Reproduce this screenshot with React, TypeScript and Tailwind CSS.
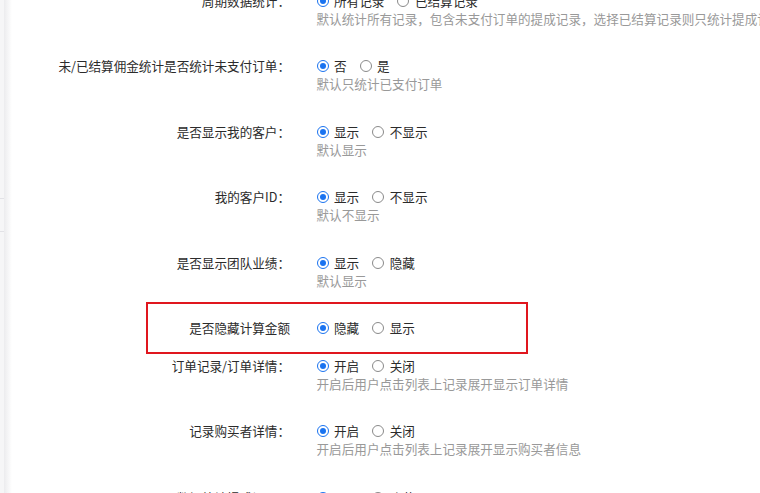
import React from 'react';

interface Row {
    label: string;
    options: string[];
    hint?: string;
}

const rows: Row[] = [
    { label: '周期数据统计：', options: ['所有记录', '已结算记录'], hint: '默认统计所有记录，包含未支付订单的提成记录，选择已结算记录则只统计提成记录' },
    { label: '未/已结算佣金统计是否统计未支付订单：', options: ['否', '是'], hint: '默认只统计已支付订单' },
    { label: '是否显示我的客户：', options: ['显示', '不显示'], hint: '默认显示' },
    { label: '我的客户ID：', options: ['显示', '不显示'], hint: '默认不显示' },
    { label: '是否显示团队业绩：', options: ['显示', '隐藏'], hint: '默认显示' },
];

const rowsAfter: Row[] = [
    { label: '订单记录/订单详情：', options: ['开启', '关闭'], hint: '开启后用户点击列表上记录展开显示订单详情' },
    { label: '记录购买者详情：', options: ['开启', '关闭'], hint: '开启后用户点击列表上记录展开显示购买者信息' },
    { label: '是否显示数据统计提成记录：', options: ['显示', '隐藏'], hint: '默认显示' },
];

const Radio: React.FC<{ checked: boolean }> = ({ checked }) =>
    checked ? (
        <span className="flex h-[12px] w-[12px] shrink-0 items-center justify-center rounded-full border-[1.5px] border-[#1a73f0] bg-white">
            <span className="h-[6px] w-[6px] rounded-full bg-[#1a73f0]" />
        </span>
    ) : (
        <span className="h-[12px] w-[12px] shrink-0 rounded-full border border-[#8a8a8a] bg-white" />
    );

const Options: React.FC<{ options: string[] }> = ({ options }) => (
    <div className="flex h-[18px] items-center">
        {options.map((o, i) => (
            <div key={o} className={`flex items-center ${i > 0 ? 'ml-[13px]' : ''}`}>
                <Radio checked={i === 0} />
                <span className="ml-[5.5px] text-[#2b2b2b]">{o}</span>
            </div>
        ))}
    </div>
);

const FormRow: React.FC<{ row: Row; className?: string }> = ({ row, className }) => (
    <div className={`flex ${className ?? ''}`}>
        <div className="h-[18px] w-[278px] shrink-0 whitespace-nowrap text-right text-[#2b2b2b]">{row.label}</div>
        <div className="ml-[26.5px] flex flex-col">
            <Options options={row.options} />
            {row.hint && <div className="whitespace-nowrap text-[#999]">{row.hint}</div>}
        </div>
    </div>
);

export default function App() {
    return (
        <div className="flex h-[493px] w-[760px] overflow-hidden bg-white font-['Noto_Sans_CJK_SC','Noto_Sans',sans-serif] text-[12.6px] leading-[18px]">
            {/* Side panel edge */}
            <div className="flex w-[4px] shrink-0 flex-col bg-[#f6f6f7]">
                <div className="h-[199px] border-b border-[#e2e2e6]" />
                <div className="h-[33px] border-b border-[#e2e2e6]" />
            </div>
            <div className="w-[8px] shrink-0 bg-gradient-to-r from-[#ececee] to-white" />

            {/* Settings form */}
            <div className="flex min-w-0 flex-1 flex-col">
                {rows.map((r, i) => (
                    <FormRow key={r.label} row={r} className={i === 0 ? 'mt-[-8.5px]' : 'mt-[29.6px]'} />
                ))}

                <div className="mt-[12.5px] ml-[134px] flex h-[52px] w-[382px] shrink-0 items-center border-2 border-[#e0161e]">
                    <div className="w-[142px] shrink-0 whitespace-nowrap text-right text-[#2b2b2b]">是否隐藏计算金额</div>
                    <div className="ml-[26.5px]">
                        <Options options={['隐藏', '显示']} />
                    </div>
                </div>

                {rowsAfter.map((r, i) => (
                    <FormRow
                        key={r.label}
                        row={r}
                        className={i === 0 ? 'mt-[2.7px]' : i === 2 ? 'mt-[30.4px]' : 'mt-[29.3px]'}
                    />
                ))}
            </div>
        </div>
    );
}
